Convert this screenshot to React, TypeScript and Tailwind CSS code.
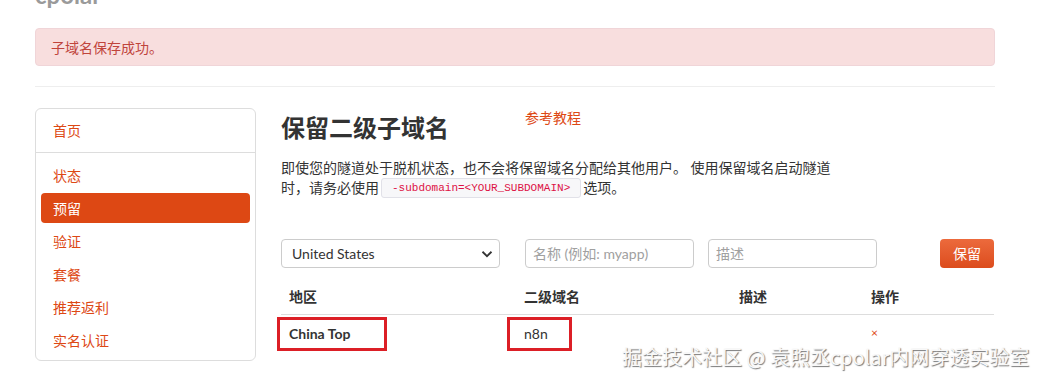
import React from 'react'

const navItems = ['状态', '预留', '验证', '套餐', '推荐返利', '实名认证']

export default function App() {
  return (
    <div className="relative h-[383px] w-[1046px] overflow-hidden bg-white text-[14px] text-[#333] font-['Lato','Noto_Sans_CJK_SC',sans-serif]">
      <div className="mx-[35px] w-[960px]">
        {/* logo, mostly scrolled out of view */}
        <div className="flex h-[28px] flex-col">
          <div className="-mt-[17px] text-[24px] font-bold leading-[24px] text-[#9a9a9a]">cpolar</div>
        </div>

        <div className="flex h-[38px] items-center rounded-[4px] border border-[#f0d5d8] bg-[#f8dede] px-[15px] text-[#c0443c]">
          子域名保存成功。
        </div>

        <div className="mt-[20px] border-t border-[#eeeeee]" />

        <div className="mt-[21px] flex gap-[25px]">
          {/* sidebar */}
          <div className="h-[253px] w-[221px] shrink-0 rounded-[6px] border border-[#dddddd] px-[5px] pt-[6px]">
            <a className="flex h-[30px] items-center px-[12px] text-[#dd4814]">首页</a>
            <div className="-mx-[5px] mt-[7px] border-t border-[#dddddd]" />
            <div className="flex flex-col gap-[3px] pt-[7px]">
              {navItems.map((item) => (
                <a
                  key={item}
                  className={
                    item === '预留'
                      ? 'flex h-[30px] items-center rounded-[4px] bg-[#dd4814] px-[12px] text-white'
                      : 'flex h-[30px] items-center px-[12px] text-[#dd4814]'
                  }
                >
                  {item}
                </a>
              ))}
            </div>
          </div>

          {/* main */}
          <div className="flex-1">
            <div className="flex items-start">
              <h1 className="mt-[2px] w-[244px] text-[24px] font-bold leading-[36px] text-[#333]">保留二级子域名</h1>
              <a className="leading-[20px] text-[#dd4814]">参考教程</a>
            </div>

            <p className="mt-[12px] leading-[20px]">
              即使您的隧道处于脱机状态，也不会将保留域名分配给其他用户。 使用保留域名启动隧道
              <br />
              时，请务必使用
              <code className="mx-[2px] inline-block h-[20px] rounded-[3px] border border-[#e1e1e8] bg-[#f7f7f9] px-[10px] align-top text-[11px] leading-[18px] text-[#dd1144] font-['Liberation_Mono',monospace]">
                -subdomain=&lt;YOUR_SUBDOMAIN&gt;
              </code>
              选项。
            </p>

            <div className="mt-[41px] flex h-[29px]">
              <div className="relative w-[219px]">
                <select className="h-[29px] w-full appearance-none rounded-[4px] border border-[#cccccc] bg-white pl-[10px] text-[14px] text-[#333]">
                  <option>United States</option>
                  <option>China Top</option>
                </select>
                <svg className="pointer-events-none absolute right-[7px] top-[9px]" width="12" height="12" viewBox="0 0 16 16">
                  <path d="M2 5l6 6 6-6" fill="none" stroke="#333" strokeWidth="2.4" />
                </svg>
              </div>
              <input
                className="ml-[25px] h-[29px] w-[169px] rounded-[4px] border border-[#cccccc] px-[7px] text-[14px] placeholder:text-[#a0a0a0]"
                placeholder="名称 (例如: myapp)"
              />
              <input
                className="ml-[14px] h-[29px] w-[169px] rounded-[4px] border border-[#cccccc] px-[7px] text-[14px] placeholder:text-[#a0a0a0]"
                placeholder="描述"
              />
              <button className="ml-auto mr-[1px] h-[29px] w-[54px] rounded-[4px] bg-linear-to-b from-[#ec6a3c] to-[#dc4c1c] text-white">
                保留
              </button>
            </div>

            <div className="mt-[11px] w-[713px]">
              <div className="grid h-[36px] grid-cols-[235px_215px_132px_1fr] items-center border-b border-[#dddddd] font-bold">
                <div className="px-[8px]">地区</div>
                <div className="px-[8px]">二级域名</div>
                <div className="px-[8px]">描述</div>
                <div className="px-[8px]">操作</div>
              </div>
              <div className="relative grid h-[36px] grid-cols-[235px_215px_132px_1fr] items-center">
                <div className="px-[8px] font-bold">China Top</div>
                <div className="px-[8px]">n8n</div>
                <div className="px-[8px]" />
                <div className="px-[8px] text-[12px] leading-[12px] text-[#dd4814]">×</div>
                <div className="absolute left-[-4px] top-[2px] h-[34px] w-[110px] border-[3px] border-[#dc1f26]" />
                <div className="absolute left-[226px] top-[2px] h-[34px] w-[65px] border-[3px] border-[#dc1f26]" />
              </div>
            </div>
          </div>
        </div>
      </div>

      <div className="absolute left-[622px] top-[344px] whitespace-nowrap text-[20px] leading-[26px] text-[#f8f8f8] [text-shadow:1px_1px_1px_#777] font-['Noto_Sans_CJK_SC',sans-serif]">
        掘金技术社区 @ 袁煦丞cpolar内网穿透实验室
      </div>
    </div>
  )
}
